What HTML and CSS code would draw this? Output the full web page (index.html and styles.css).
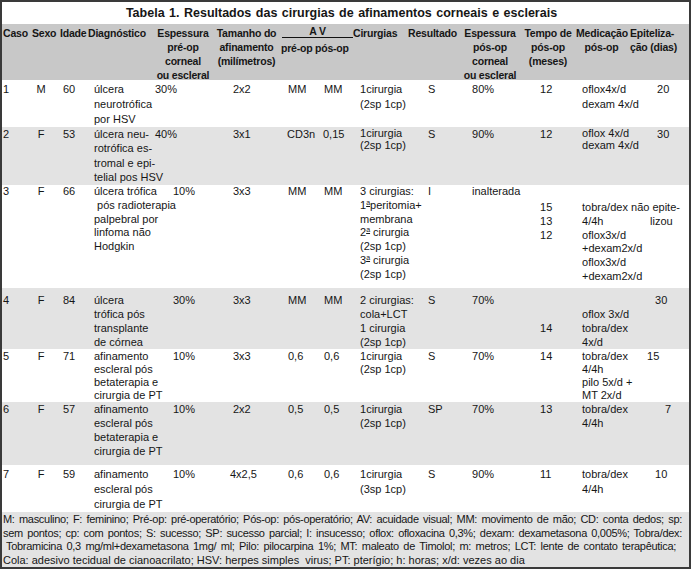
FILE: index.html
```html
<!DOCTYPE html>
<html lang="pt">
<head>
<meta charset="utf-8">
<title>Tabela 1</title>
<link rel="stylesheet" href="styles.css">
</head>
<body>
<div class="sheet">
  <div class="title">Tabela 1. Resultados das cirurgias de afinamentos corneais e esclerais</div>
  <table class="grid">
    <colgroup>
      <col class="w-caso"><col class="w-sexo"><col class="w-idade"><col class="w-diag"><col class="w-esp"><col class="w-tam"><col class="w-avpre"><col class="w-avpos"><col class="w-cir"><col class="w-res"><col class="w-esp2"><col class="w-tempo"><col class="w-med"><col class="w-epi">
    </colgroup>
    <thead>
      <tr>
        <th class="h-caso">Caso</th>
        <th class="h-sexo">Sexo</th>
        <th class="h-idade">Idade</th>
        <th class="h-diag">Diagnóstico</th>
        <th class="h-center"><div class="h4">Espessura<br>pré-op<br>corneal<br>ou escleral</div></th>
        <th class="h-center">Tamanho do<br>afinamento<br>(milímetros)</th>
        <th colspan="2" class="h-av"><div class="av-top">A V</div><div class="av-sub"><span class="av-pre">pré-op</span><span class="av-pos">pós-op</span></div></th>
        <th class="h-cir">Cirurgias</th>
        <th class="h-res">Resultado</th>
        <th class="h-center"><div class="h4">Espessura<br>pós-op<br>corneal<br>ou escleral</div></th>
        <th class="h-center">Tempo de<br>pós-op<br>(meses)</th>
        <th class="h-center h-med">Medicação<br>pós-op</th>
        <th class="h-epi">Epiteliza-<br>ção (dias)</th>
      </tr>
    </thead>
    <tbody>
      <tr class="r1">
        <td class="caso">1</td><td class="sexo">M</td><td class="idade">60</td>
        <td class="diag">úlcera<br>neurotrófica<br>por HSV</td>
        <td class="esp">30%</td><td class="tam">2x2</td><td class="avpre">MM</td><td class="avpos">MM</td>
        <td class="cir">1cirurgia<br>(2sp 1cp)</td><td class="res">S</td><td class="esp2">80%</td><td class="tempo">12</td>
        <td class="med">oflox4x/d<br>dexam 4x/d</td><td class="epi">20</td>
      </tr>
      <tr class="r2 shade">
        <td class="caso">2</td><td class="sexo">F</td><td class="idade">53</td>
        <td class="diag">úlcera neu-<br>rotrófica es-<br>tromal e epi-<br>telial pos HSV</td>
        <td class="esp">40%</td><td class="tam">3x1</td><td class="avpre avpre-cd">CD3n</td><td class="avpos avpos-w">0,15</td>
        <td class="cir tight">1cirurgia<br>(2sp 1cp)</td><td class="res">S</td><td class="esp2">90%</td><td class="tempo">12</td>
        <td class="med tight">oflox 4x/d<br>dexam 4x/d</td><td class="epi">30</td>
      </tr>
      <tr class="r3">
        <td class="caso">3</td><td class="sexo">F</td><td class="idade">66</td>
        <td class="diag">úlcera trófica<br>&nbsp;pós radioterapia<br>palpebral por<br>linfoma não<br>Hodgkin</td>
        <td class="esp esp-in">10%</td><td class="tam">3x3</td><td class="avpre">MM</td><td class="avpos">MM</td>
        <td class="cir">3 cirurgias:<br>1<sup class="ord">a</sup>peritomia+<br>membrana<br>2<sup class="ord">a</sup> cirurgia<br>(2sp 1cp)<br>3<sup class="ord">a</sup> cirurgia<br>(2sp 1cp)</td>
        <td class="res">I</td><td class="esp2">inalterada</td>
        <td class="tempo skip">15<br>13<br>12</td>
        <td class="med skip">tobra/dex<br>4/4h<br>oflox3x/d<br>+dexam2x/d<br>oflox3x/d<br>+dexam2x/d</td>
        <td class="epi epi-free skip">não epite-<br><span class="lz">lizou</span></td>
      </tr>
      <tr class="r4 shade">
        <td class="caso">4</td><td class="sexo">F</td><td class="idade">84</td>
        <td class="diag">úlcera<br>trófica pós<br>transplante<br>de córnea</td>
        <td class="esp esp-in">30%</td><td class="tam">3x3</td><td class="avpre">MM</td><td class="avpos">MM</td>
        <td class="cir">2 cirurgias:<br>cola+LCT<br>1 cirurgia<br>(2sp 1cp)</td>
        <td class="res">S</td><td class="esp2">70%</td>
        <td class="tempo skip2">14</td>
        <td class="med skip">oflox 3x/d<br>tobra/dex<br>4x/d</td>
        <td class="epi e30">30</td>
      </tr>
      <tr class="r5">
        <td class="caso">5</td><td class="sexo">F</td><td class="idade">71</td>
        <td class="diag">afinamento<br>escleral pós<br>betaterapia e<br>cirurgia de PT</td>
        <td class="esp esp-in">10%</td><td class="tam">3x3</td><td class="avpre">0,6</td><td class="avpos">0,6</td>
        <td class="cir">1cirurgia<br>(2sp 1cp)</td><td class="res">S</td><td class="esp2">70%</td><td class="tempo">14</td>
        <td class="med">tobra/dex<br>4/4h<br>pilo 5x/d +<br>MT 2x/d</td><td class="epi e15">15</td>
      </tr>
      <tr class="r6 shade">
        <td class="caso">6</td><td class="sexo">F</td><td class="idade">57</td>
        <td class="diag">afinamento<br>escleral pós<br>betaterapia e<br>cirurgia de PT</td>
        <td class="esp esp-in">10%</td><td class="tam">2x2</td><td class="avpre">0,5</td><td class="avpos">0,5</td>
        <td class="cir">1cirurgia<br>(2sp 1cp)</td><td class="res">SP</td><td class="esp2">70%</td><td class="tempo">13</td>
        <td class="med">tobra/dex<br>4/4h</td><td class="epi e7">7</td>
      </tr>
      <tr class="r7">
        <td class="caso">7</td><td class="sexo">F</td><td class="idade">59</td>
        <td class="diag">afinamento<br>escleral pós<br>cirurgia de PT</td>
        <td class="esp esp-in">10%</td><td class="tam tam-wide">4x2,5</td><td class="avpre">0,6</td><td class="avpos">0,6</td>
        <td class="cir">1cirurgia<br>(3sp 1cp)</td><td class="res">S</td><td class="esp2">90%</td><td class="tempo">11</td>
        <td class="med">tobra/dex<br>4/4h</td><td class="epi e30">10</td>
      </tr>
    </tbody>
  </table>
  <div class="notes">
    <div class="nl j">M: masculino; F: feminino; Pré-op: pré-operatório; Pós-op: pós-operatório; AV: acuidade visual; MM: movimento de mão; CD: conta dedos; sp:</div>
    <div class="nl j">sem pontos; cp: com pontos; S: sucesso; SP: sucesso parcial; I: insucesso; oflox: ofloxacina 0,3%; dexam: dexametasona 0,005%; Tobra/dex:</div>
    <div class="nl j l3">Tobramicina 0,3 mg/ml+dexametasona 1mg/ ml; Pilo: pilocarpina 1%; MT: maleato de Timolol; m: metros; LCT: lente de contato terapêutica;</div>
    <div class="nl last">Cola: adesivo tecidual de cianoacrilato; HSV: herpes simples&nbsp; virus; PT: pterígio; h: horas; x/d: vezes ao dia</div>
  </div>
</div>
</body>
</html>
```
FILE: styles.css
```css
* { box-sizing: border-box; }
html, body { margin: 0; padding: 0; background: #fff; }
body {
  font-family: "Liberation Sans", Arial, Helvetica, sans-serif;
  font-size: 11px;
  color: #161616;
}

.sheet {
  width: 691px;
  height: 569px;
  border: 2px solid #3a3a3a;
  background: #fff;
  overflow: hidden;
}

.title {
  height: 22px;
  line-height: 22px;
  text-align: center;
  font-weight: bold;
  font-size: 12.5px;
  word-spacing: 1px;
  padding-right: 8px;
}

.grid {
  width: 687px;
  border-collapse: collapse;
  border-spacing: 0;
  table-layout: fixed;
}
th, td {
  padding: 0;
  vertical-align: top;
  text-align: left;
  white-space: nowrap;
}

.w-caso { width: 28px; }
.w-sexo { width: 29px; }
.w-idade { width: 28px; }
.w-diag { width: 66px; }
.w-esp { width: 60px; }
.w-tam { width: 67px; }
.w-avpre { width: 32px; }
.w-avpos { width: 40px; }
.w-cir { width: 54px; }
.w-res { width: 54px; }
.w-esp2 { width: 60px; }
.w-tempo { width: 56px; }
.w-med { width: 53px; }
.w-epi { width: 60px; }

/* header */
.grid thead tr { background: #c8c8c8; height: 56px; }
.grid th {
  font-weight: bold;
  font-size: 10.5px;
  line-height: 14px;
  padding-top: 2px;
  letter-spacing: -0.2px;
}
.h4 { height: 54px; }
.h-caso { padding-left: 1px; }
.h-sexo { padding-left: 2px; }
.h-idade { padding-left: 1px; }
.h-diag { padding-left: 1px; }
.grid .h-center { text-align: center; }
.h-med { padding-right: 2px; }
.h-cir { padding-left: 1px; }
.h-res { padding-left: 2px; }
.h-epi { padding-left: 1px; }

.av-top {
  line-height: 11px;
  text-align: center;
  border-bottom: 1px solid #111;
  margin-left: 2px;
  margin-right: -1px;
}
.av-sub {
  display: flex;
  margin-top: 3px;
  padding-left: 1px;
}
.av-pre { width: 34px; }

/* body */
.shade { background: #e3e3e3; }

.r1 { height: 47px; }
.r1 td { line-height: 15px; padding-top: 2px; }
.r2 { height: 58px; }
.r2 td { line-height: 14.3px; padding-top: 0; }
.r2 td.tight { line-height: 11.5px; padding-top: 1px; }
.r3 { height: 103px; }
.r3 td { line-height: 13.75px; padding-top: 0; }
.r3 td.skip { padding-top: 16px; }
.r4 { height: 61px; }
.r4 td { line-height: 14px; padding-top: 5px; }
.r4 td.skip { padding-top: 19px; }
.r4 td.skip2 { padding-top: 33px; }
.r5 { height: 53px; }
.r5 td { line-height: 13px; padding-top: 1px; }
.r6 { height: 63px; }
.r6 td { line-height: 14px; padding-top: 0; }
.r7 { height: 47px; }
.r7 td { line-height: 15px; padding-top: 2px; }

.caso { padding-left: 1px; }
.sexo { text-align: center; padding-right: 7px; }
.grid td.sexo { text-align: center; }
.idade { padding-left: 4px; }
.diag { padding-left: 7px; }
.esp { padding-left: 2px; }
.esp.esp-in { padding-left: 20px; }
.tam { padding-left: 20px; }
.tam.tam-wide { padding-left: 17px; }
.avpre { padding-left: 8px; }
.avpre.avpre-cd { padding-left: 7px; }
.avpos { padding-left: 12px; }
.avpos.avpos-w { padding-left: 11px; }
.cir { padding-left: 8px; }
.res { padding-left: 22px; }
.esp2 { padding-left: 12px; }
.tempo { padding-left: 20px; }
.med { padding-left: 6px; }
.epi { padding-left: 28px; }
.epi.e30 { padding-left: 26px; }
.epi.e15 { padding-left: 18px; }
.epi.e7 { padding-left: 36px; }
.epi.epi-free { padding-left: 2px; }
.lz { padding-left: 19px; }

.ord {
  font-size: 7px;
  line-height: 0;
  vertical-align: 4px;
  text-decoration: underline;
}

/* notes */
.notes {
  background: #e3e3e3;
  height: 55px;
  padding: 1px 7px 0 1px;
  line-height: 13.7px;
  font-size: 11px;
}
.nl { letter-spacing: -0.3px; white-space: normal; }
.nl.last { letter-spacing: 0; }
.j { text-align: justify; text-align-last: justify; }
.l3 { margin-left: 3px; margin-right: 6px; }
```
